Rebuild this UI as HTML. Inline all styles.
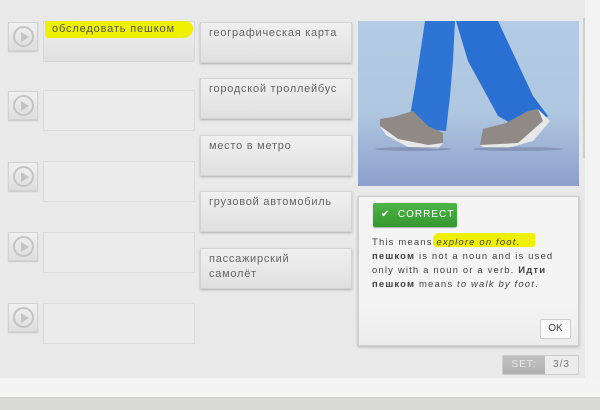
<!DOCTYPE html>
<html><head><meta charset="utf-8"><style>
*{margin:0;padding:0;box-sizing:border-box}
body{width:600px;height:410px;overflow:hidden;background:#e9e9e9;font-family:"Liberation Sans","DejaVu Sans",sans-serif;position:relative}
.a{position:absolute}
.play{width:30px;height:29px;background:linear-gradient(#f0f0f0,#dedede);border:1px solid #d2d2d2;box-shadow:0 1px 1px rgba(0,0,0,.15)}
.play i{position:absolute;left:4px;top:3px;width:21px;height:21px;border:2px solid #c4c4c4;border-radius:50%}
.play i:after{content:"";position:absolute;left:6px;top:4px;border-left:8px solid #c4c4c4;border-top:5px solid transparent;border-bottom:5px solid transparent}
.slot{width:152px;height:41px;border:1px solid #dcdcdc;background:#ebebeb}
.btn{width:152px;height:41px;background:linear-gradient(#f0f0f0,#e0e0e0);border:1px solid #d3d3d3;box-shadow:0 1px 2px rgba(0,0,0,.25);font-size:11px;letter-spacing:.75px;color:#666;padding:3px 8px;line-height:15px;white-space:nowrap}
.fb{font-size:9.5px;letter-spacing:1.15px;color:#444;line-height:14px;white-space:nowrap}
</style></head><body>
<div class="a" style="left:585px;top:0;width:15px;height:378px;background:#f3f3f3"></div>
<div class="a" style="left:583px;top:18px;width:2px;height:140px;background:#cfcfcf"></div>
<div class="a" style="left:0;top:378px;width:600px;height:19px;background:#f4f4f4"></div>
<div class="a" style="left:0;top:397px;width:600px;height:13px;background:#d9d9d5;border-top:1px solid #ccc"></div>

<div class="a play" style="left:8px;top:22px"><i></i></div>
<div class="a play" style="left:8px;top:91px"><i></i></div>
<div class="a play" style="left:8px;top:162px"><i></i></div>
<div class="a play" style="left:8px;top:232px"><i></i></div>
<div class="a play" style="left:8px;top:303px"><i></i></div>

<div class="a btn" style="left:43px;top:21px;box-shadow:none;border-color:#d8d8d8"></div>
<div class="a" style="left:45px;top:21px;width:148px;height:17px;background:#eef000;border-radius:2px 8px 10px 3px"></div>
<div class="a" style="left:52px;top:23px;font-size:11px;letter-spacing:.85px;color:#555;white-space:nowrap">обследовать пешком</div>
<div class="a slot" style="left:43px;top:90px"></div>
<div class="a slot" style="left:43px;top:161px"></div>
<div class="a slot" style="left:43px;top:232px"></div>
<div class="a slot" style="left:43px;top:303px"></div>

<div class="a btn" style="left:200px;top:22px">географическая карта</div>
<div class="a btn" style="left:200px;top:78px">городской троллейбус</div>
<div class="a btn" style="left:200px;top:135px">место в метро</div>
<div class="a btn" style="left:200px;top:191px">грузовой автомобиль</div>
<div class="a btn" style="left:200px;top:248px">пассажирский<br>самолёт</div>

<svg class="a" style="left:358px;top:21px" width="221" height="165" viewBox="0 0 221 165">
<defs><linearGradient id="g" x1="0" y1="0" x2="0" y2="1"><stop offset="0" stop-color="#b3cbe4"/><stop offset=".55" stop-color="#afc7e0"/><stop offset="1" stop-color="#8d9fcc"/></linearGradient></defs>
<rect width="221" height="165" fill="url(#g)"/>
<path d="M67 0H97L95 40L92 75L88 110L62 108L52 95L58 60Z" fill="#2e74d4"/>
<path d="M98 0H140L175 75L190 95L170 112L140 95L110 40Z" fill="#2a70d2"/>
<path d="M22 98L35 96L55 90L70 105L85 112L85 122L70 124L40 118L22 105Z" fill="#8f8a85"/>
<path d="M22 105L40 118L70 124L85 122L80 128L50 126L28 114Z" fill="#e8e8e8"/>
<path d="M125 108L148 102L170 90L180 88L185 100L175 115L160 122L140 126L122 124Z" fill="#8f8a85"/>
<path d="M180 88L192 100L175 120L150 127L125 126L122 124L160 122L185 100Z" fill="#e8e8e8"/>
<ellipse cx="55" cy="128" rx="38" ry="2" fill="#6d7a9a" opacity=".5"/>
<ellipse cx="160" cy="128" rx="45" ry="2" fill="#6d7a9a" opacity=".5"/>
</svg>

<div class="a" style="left:358px;top:196px;width:221px;height:150px;background:linear-gradient(#f4f4f4 70%,#ececec);border:1px solid #cfcfcf;box-shadow:0 1px 3px rgba(0,0,0,.25)"></div>
<div class="a" style="left:373px;top:203px;width:84px;height:24px;background:linear-gradient(#4cb44a,#35982f);border-radius:2px;color:#fff;font-size:10px;letter-spacing:1px;line-height:24px;padding-left:8px;box-shadow:0 1px 1px rgba(0,0,0,.3)">✔&nbsp; CORRECT</div>
<div class="a" style="left:433px;top:233px;width:102px;height:14px;background:#eef000;border-radius:6px 2px 2px 4px"></div>
<div class="a fb" style="left:372px;top:236px">This means <i>explore on foot</i>.<br><b>пешком</b> is not a noun and is used<br>only with a noun or a verb. <b>Идти</b><br><b>пешком</b> means <i>to walk by foot</i>.</div>
<div class="a" style="left:540px;top:319px;width:31px;height:20px;background:#fafafa;border:1px solid #ccc;border-radius:2px;font-size:10px;color:#444;text-align:center;line-height:18px">OK</div>
<div class="a" style="left:502px;top:355px;width:77px;height:20px;border:1px solid #ccc;border-radius:2px;background:#ececec;font-size:10px;letter-spacing:1px;line-height:18px">
<span class="a" style="left:0;top:0;width:42px;height:18px;background:linear-gradient(#c2c2c2,#b0b0b0);color:#e8e8e8;text-align:center">SET:</span>
<span class="a" style="left:42px;top:0;width:33px;text-align:center;color:#777">3/3</span></div>
</body></html>
